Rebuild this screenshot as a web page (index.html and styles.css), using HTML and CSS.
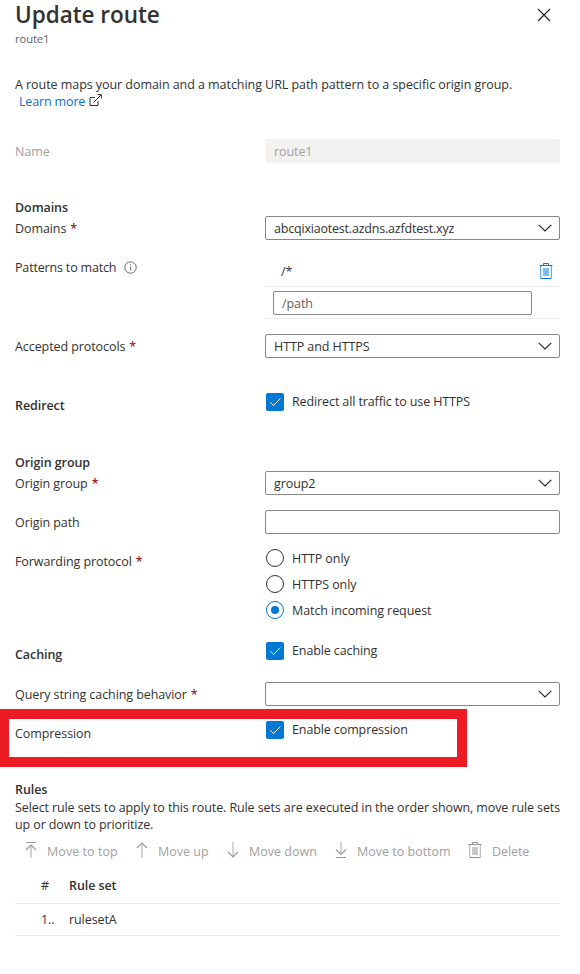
FILE: index.html
```html
<!DOCTYPE html>
<html lang="en">
<head>
<meta charset="utf-8">
<title>Update route</title>
<link rel="stylesheet" href="styles.css">
</head>
<body>
<svg class="defs" width="0" height="0" aria-hidden="true">
  <symbol id="chevron" viewBox="0 0 14 8"><path d="M.7.8 7 7 13.3.8" fill="none" stroke="currentColor" stroke-width="1.15"/></symbol>
  <symbol id="check" viewBox="0 0 18 18"><path d="M4.300 9.300 7.600 12.600 14.200 5.600" fill="none" stroke="currentColor" stroke-width="1"/></symbol>
  <symbol id="trash" viewBox="0 0 14 16"><path d="M4.500 2V.5h5V2" fill="none" stroke="currentColor"/><path d="M1.700 3v12.500h10.600V3" fill="none" stroke="currentColor" opacity=".75"/><path d="M.5 2.500h13M2 15.500h10" fill="none" stroke="currentColor"/><path d="M4 5h6v8H4z" fill="currentColor" opacity=".5"/></symbol>
</svg>
<main class="panel">
  <header class="header">
    <div>
      <h1>Update route</h1>
      <p class="subtitle">route1</p>
    </div>
    <svg class="close" viewBox="0 0 14 14"><path d="M1 1l12 12M13 1 1 13" fill="none" stroke="#222" stroke-width="1.1"/></svg>
  </header>

  <p class="intro">A route maps your domain and a matching URL path pattern to a specific origin group.<br>
    <a class="link">Learn more</a><svg class="external" viewBox="0 0 13 13"><path d="M6 3.500H1v8h8V7M4.500 8.500 12 1M8.500.6h3.900v3.900" fill="none" stroke="#333"/></svg></p>

  <div class="row row-name">
    <span class="label muted">Name</span>
    <div class="box disabled">route1</div>
  </div>

  <h2 class="after-section">Domains</h2>
  <div class="row">
    <span class="label">Domains <b class="req">*</b></span>
    <div class="box select domain">abcqixiaotest.azdns.azfdtest.xyz<svg class="chevron"><use href="#chevron"/></svg></div>
  </div>
  <div class="row spaced">
    <span class="label patterns-label">Patterns to match <svg class="info" viewBox="0 0 13 13"><circle cx="6.500" cy="6.500" r="5.700" fill="none" stroke="#666"/><path d="M6.500 5.500v4M6.500 3.300v1.200" stroke="#777" stroke-width="1.100"/></svg></span>
    <div class="patterns">
      <div class="pattern"><span>/*</span><svg class="trash blue"><use href="#trash"/></svg></div>
      <div class="pattern-new"><div class="box placeholder">/path</div></div>
    </div>
  </div>
  <div class="row spaced">
    <span class="label">Accepted protocols <b class="req">*</b></span>
    <div class="box select">HTTP and HTTPS<svg class="chevron"><use href="#chevron"/></svg></div>
  </div>

  <div class="row after-section">
    <strong class="label">Redirect</strong>
    <div class="option"><svg class="checkbox"><use href="#check"/></svg><span class="check-text">Redirect all traffic to use HTTPS</span></div>
  </div>

  <h2 class="origin-heading">Origin group</h2>
  <div class="row">
    <span class="label">Origin group <b class="req">*</b></span>
    <div class="box select">group2<svg class="chevron"><use href="#chevron"/></svg></div>
  </div>
  <div class="row spaced">
    <span class="label">Origin path</span>
    <div class="box"></div>
  </div>
  <div class="row spaced">
    <span class="label">Forwarding protocol <b class="req">*</b></span>
    <div class="radios">
      <div class="option"><i class="radio"></i>HTTP only</div>
      <div class="option"><i class="radio"></i>HTTPS only</div>
      <div class="option"><i class="radio selected"></i>Match incoming request</div>
    </div>
  </div>

  <div class="row caching">
    <strong class="label">Caching</strong>
    <div class="option"><svg class="checkbox"><use href="#check"/></svg><span class="check-text">Enable caching</span></div>
  </div>
  <div class="row query">
    <span class="label">Query string caching behavior <b class="req">*</b></span>
    <div class="box select"><svg class="chevron"><use href="#chevron"/></svg></div>
  </div>
  <div class="row spaced compression">
    <span class="label">Compression</span>
    <div class="option"><svg class="checkbox"><use href="#check"/></svg><span class="check-text">Enable compression</span></div>
    <div class="highlight"></div>
  </div>

  <h2 class="after-section">Rules</h2>
  <p class="rules-text">Select rule sets to apply to this route. Rule sets are executed in the order shown, move rule sets<br>up or down to prioritize.</p>
  <div class="toolbar">
    <span class="tool top"><svg viewBox="0 0 12 16"><path d="M1 .5h10" stroke="#999"/><path d="M6 3v13" stroke="#c4c4c4" stroke-width="1.500"/><path d="M1 8l5-5 5 5" fill="none" stroke="#999" stroke-width="1.200"/></svg>Move to top</span>
    <span class="tool up"><svg viewBox="0 0 12 16"><path d="M6 1v15" stroke="#c4c4c4" stroke-width="1.500"/><path d="M1 6l5-5 5 5" fill="none" stroke="#999" stroke-width="1.200"/></svg>Move up</span>
    <span class="tool down"><svg viewBox="0 0 12 16"><path d="M6 0v15" stroke="#c4c4c4" stroke-width="1.500"/><path d="M1 10l5 5 5-5" fill="none" stroke="#999" stroke-width="1.200"/></svg>Move down</span>
    <span class="tool bottom"><svg viewBox="0 0 12 16"><path d="M6 0v12" stroke="#c4c4c4" stroke-width="1.500"/><path d="M1 7.500l5 5 5-5" fill="none" stroke="#999" stroke-width="1.200"/><path d="M1 15.500h10" stroke="#999"/></svg>Move to bottom</span>
    <span class="tool delete"><svg class="trash"><use href="#trash"/></svg>Delete</span>
  </div>
  <div class="table">
    <div class="tr th"><span>#</span><span>Rule set</span></div>
    <div class="tr"><span>1..</span><span>rulesetA</span></div>
  </div>
</main>
</body>
</html>
```
FILE: styles.css
```css
* { box-sizing: border-box; }
body {
  margin: 0;
  background: #fff;
  color: #323130;
  font: 12.5px/17px "Open Sans", "Noto Sans", sans-serif;
  letter-spacing: -0.08px;
}
h1, h2, p { margin: 0; }
svg { display: block; flex: none; }
.defs { position: absolute; }
.panel { width: 560px; padding-left: 15px; }

.header { display: flex; justify-content: space-between; height: 48px; }
h1 { font-size: 22.5px; font-weight: 600; line-height: 30px; letter-spacing: -0.03px; }
.subtitle { color: #605e5c; font-size: 11.2px; line-height: 18px; }
.close { width: 14px; height: 14px; margin: 8px 9px 0 0; }

.intro { margin-top: 28px; height: 34px; white-space: nowrap; letter-spacing: -0.055px; }
.link { margin-left: 4px; color: #0f6fc6; letter-spacing: -0.15px; }
.external { display: inline-block; width: 13px; height: 13px; margin-left: 4px; vertical-align: -1px; }

.row { display: grid; grid-template-columns: 250px 295px; align-items: start; }
.row-name { margin-top: 29px; }
.spaced { margin-top: 15px; }
.label { display: flex; align-items: center; gap: 4px; height: 24px; }
.patterns-label { letter-spacing: -0.17px; }
strong, h2 { font-weight: 600; }
h2 { font-size: 12.5px; height: 18px; line-height: 20px; }
.after-section { margin-top: 35px; }
.muted { color: #a19f9d; }
.req { color: #a4262c; font-size: 12.5px; font-weight: 600; }
.info { width: 13px; height: 13px; margin: 1px 0 0 4px; }

.box {
  display: flex;
  align-items: center;
  justify-content: space-between;
  height: 24px;
  padding: 0 8px;
  border: 1px solid #8a8886;
  border-radius: 2px;
}
.disabled { background: #f3f2f1; border-color: #f3f2f1; color: #a19f9d; }
.placeholder { color: #605e5c; }
.select { padding-right: 7px; }
.domain { letter-spacing: -0.2px; }
.chevron { width: 14px; height: 8px; margin-left: auto; color: #222; }

.pattern {
  display: flex;
  align-items: center;
  justify-content: space-between;
  height: 32px;
  padding: 1px 7px 0 16px;
  border-bottom: 1px solid #edebe9;
}
.pattern-new { height: 32px; padding: 4px 28px 0 8px; border-bottom: 1px solid #edebe9; }
.trash { width: 14px; height: 16px; }
.blue { color: #0078d4; }

.option { display: flex; align-items: center; gap: 8px; height: 18px; padding-left: 1px; }
.check-text { margin-bottom: 2px; letter-spacing: -0.11px; }
.checkbox { width: 18px; height: 18px; border-radius: 2px; background: #0078d4; color: #fff; }
.radios { display: grid; gap: 8px; }
.radio { display: grid; place-items: center; width: 18px; height: 18px; border: 1px solid #323130; border-radius: 50%; }
.selected { border-color: #0078d4; }
.selected::before { content: ""; width: 8px; height: 8px; border-radius: 50%; background: #0078d4; }

.origin-heading { margin-top: 36px; }
.caching { margin-top: 23px; }
.query { margin-top: 16px; }
.compression { position: relative; }
.highlight {
  position: absolute;
  left: -15px;
  top: -12px;
  width: 467px;
  height: 58px;
  border: 10px solid #ed1c24;
  border-left-width: 9px;
}

.rules-text { margin-top: 1px; white-space: nowrap; letter-spacing: -0.105px; }
.toolbar { display: flex; height: 34px; padding: 9px 0 0 10px; color: #a19f9d; letter-spacing: 0; }
.tool { display: flex; align-items: center; gap: 10px; height: 18px; white-space: nowrap; }
.tool svg:not(.trash) { width: 12px; height: 16px; margin-top: -3px; }
.tool .trash { margin-top: -3px; color: #919191; }
.top { width: 111px; letter-spacing: 0.06px; }
.up { width: 91px; }
.down { width: 108px; }
.bottom { width: 133px; }
.delete { letter-spacing: -0.08px; }

.tr { display: grid; grid-template-columns: 28px 1fr; align-items: center; height: 32px; padding-left: 26px; border-bottom: 1px solid #edebe9; }
.th { height: 37px; font-weight: 600; }
.th span:first-child { font-weight: 400; }
```
